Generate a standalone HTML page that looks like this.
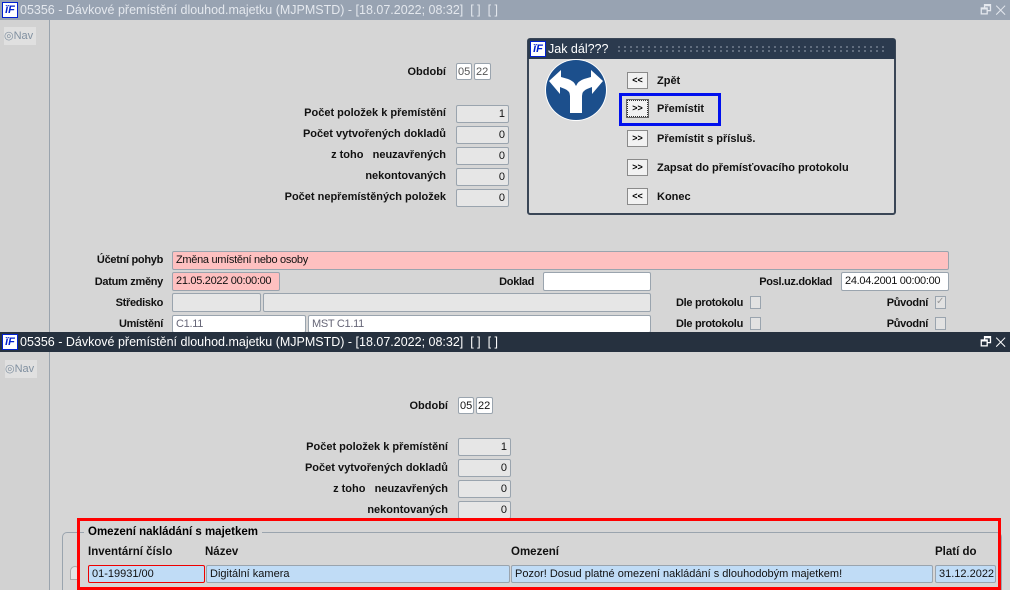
<!DOCTYPE html>
<html><head><meta charset="utf-8"><style>
*{margin:0;padding:0;box-sizing:border-box}
html,body{width:1010px;height:590px;overflow:hidden}
body{background:#d6d6d6;font-family:"Liberation Sans",sans-serif;font-size:11px;position:relative}
.a{position:absolute}
.lb{position:absolute;font-weight:bold;font-size:11px;text-align:right;color:#111;white-space:nowrap}
.f{position:absolute;background:#e6e6e6;border:1px solid #9aa4ae;border-radius:2px;font-size:11px;color:#111;padding:0 3px;line-height:16px;white-space:nowrap;overflow:hidden}
.fw{background:#fff}
.fr{text-align:right}
.tb{position:absolute;left:0;width:1010px;height:20px;font-size:12.5px;line-height:20px;padding-left:20px}
.logo{position:absolute;left:2px;top:2px;width:16px;height:16px;background:#fff;border:1px solid #0020d0;color:#0020d0;font:italic bold 11px/14px "Liberation Sans",sans-serif;text-align:center}
.nav{position:absolute;left:0;width:50px;border-right:1px solid #9aa4ae;background:#d2d2d2}
.btn{position:absolute;width:21px;height:17px;background:#f2f2f2;border:1px solid #8a8a8a;font-size:9px;font-weight:bold;text-align:center;line-height:15px}
.bl{position:absolute;font-weight:bold;font-size:11px;color:#111}
.cb{position:absolute;width:11px;height:13px;border:1px solid #9aa4ae;background:#e2e2e2}
.n{letter-spacing:-0.3px}
</style></head><body>
<!-- window 1 -->
<div class="tb" style="top:0;background:#98a3b2;color:#e4e8ee"><div class="logo">ĭF</div>05356 - Dávkové přemístění dlouhod.majetku (MJPMSTD) - [18.07.2022; 08:32] &nbsp;[ ] &nbsp;[ ]
<span class="a" style="right:4px;top:0;color:#e4e8ee">🗗 ✕</span></div>
<div class="nav" style="top:20px;height:312px"></div>
<div class="a" style="left:4px;top:27px;width:32px;height:18px;background:#e0e0e0;color:#8090a0;font-size:11px;line-height:18px">◎Nav</div>

<div class="lb" style="left:380px;top:66px;width:66px">Období</div>
<div class="f fw" style="left:456px;top:63px;width:16px;height:17px;padding:0 1px;color:#555">05</div>
<div class="f fw" style="left:474px;top:63px;width:17px;height:17px;padding:0 1px;color:#555">22</div>
<div class="lb" style="left:200px;top:107px;width:246px">Počet položek k přemístění</div>
<div class="f fr" style="left:456px;top:105px;width:53px;height:18px">1</div>
<div class="lb" style="left:200px;top:128px;width:246px">Počet vytvořených dokladů</div>
<div class="f fr" style="left:456px;top:126px;width:53px;height:18px">0</div>
<div class="lb" style="left:200px;top:149px;width:246px">z toho &nbsp;&nbsp;neuzavřených</div>
<div class="f fr" style="left:456px;top:147px;width:53px;height:18px">0</div>
<div class="lb" style="left:200px;top:170px;width:246px">nekontovaných</div>
<div class="f fr" style="left:456px;top:168px;width:53px;height:18px">0</div>
<div class="lb" style="left:200px;top:191px;width:246px">Počet nepřemístěných položek</div>
<div class="f fr" style="left:456px;top:189px;width:53px;height:18px">0</div>

<!-- dialog -->
<div class="a" style="left:527px;top:38px;width:369px;height:177px;background:#dcdcdc;border:2px solid #3a4656;border-radius:3px"></div>
<div class="a" style="left:528px;top:39px;width:367px;height:20px;background:#2b3a4e;color:#fff;font-size:12.5px;line-height:20px;padding-left:20px">Jak dál???<span class="a" style="left:88px;top:6px;width:270px;height:8px;background-image:radial-gradient(#8b96a6 1px,transparent 1.2px);background-size:6px 4px"></span><div class="logo" style="top:2px;left:2px">ĭF</div></div>
<svg class="a" style="left:544px;top:58px" width="64" height="64" viewBox="0 0 64 64"><circle cx="32" cy="32" r="31" fill="#fff"/><circle cx="32" cy="32" r="30" fill="#1c4f8c"/><path d="M26 55 V38 Q26 33 21 31 L16 29 V36 L5 23 L17 12 V19 L24 21 Q30 23 32 28 Q34 23 40 21 L47 19 V12 L59 23 L48 36 V29 L43 31 Q38 33 38 38 V55 Z" fill="#fff"/></svg>
<div class="btn" style="left:627px;top:72px">&lt;&lt;</div><div class="bl" style="left:657px;top:75px">Zpět</div>
<div class="a" style="left:619px;top:93px;width:102px;height:33px;border:3px solid #0010ee"></div>
<div class="btn" style="left:627px;top:100px;border:1px dotted #333;outline:1px solid #666">&gt;&gt;</div><div class="bl" style="left:657px;top:103px">Přemístit</div>
<div class="btn" style="left:627px;top:130px">&gt;&gt;</div><div class="bl" style="left:657px;top:133px">Přemístit s přísluš.</div>
<div class="btn" style="left:627px;top:159px">&gt;&gt;</div><div class="bl" style="left:657px;top:162px">Zapsat do přemísťovacího protokolu</div>
<div class="btn" style="left:627px;top:188px">&lt;&lt;</div><div class="bl" style="left:657px;top:191px">Konec</div>

<!-- lower section -->
<div class="lb n" style="left:60px;top:254px;width:103px">Účetní pohyb</div>
<div class="f n" style="left:172px;top:251px;width:777px;height:19px;line-height:17px;background:#fec0c0">Změna umístění nebo osoby</div>
<div class="lb n" style="left:60px;top:276px;width:103px">Datum změny</div>
<div class="f n" style="left:172px;top:272px;width:108px;height:19px;line-height:17px;background:#fec0c0">21.05.2022 00:00:00</div>
<div class="lb n" style="left:460px;top:276px;width:74px">Doklad</div>
<div class="f fw" style="left:543px;top:272px;width:108px;height:19px"></div>
<div class="lb n" style="left:720px;top:276px;width:112px">Posl.uz.doklad</div>
<div class="f fw n" style="left:841px;top:272px;width:108px;height:19px;line-height:17px">24.04.2001 00:00:00</div>
<div class="lb n" style="left:60px;top:297px;width:103px">Středisko</div>
<div class="f" style="left:172px;top:293px;width:89px;height:19px"></div>
<div class="f" style="left:263px;top:293px;width:388px;height:19px"></div>
<div class="lb n" style="left:640px;top:297px;width:103px">Dle protokolu</div>
<div class="cb" style="left:750px;top:296px"></div>
<div class="lb n" style="left:840px;top:297px;width:88px">Původní</div>
<div class="cb" style="left:935px;top:296px;font-size:10px;color:#999;line-height:10px">✓</div>
<div class="lb n" style="left:60px;top:318px;width:103px">Umístění</div>
<div class="f fw n" style="left:172px;top:315px;width:134px;height:18px;color:#667">C1.11</div>
<div class="f fw n" style="left:308px;top:315px;width:343px;height:18px;color:#667">MST C1.11</div>
<div class="lb n" style="left:640px;top:318px;width:103px">Dle protokolu</div>
<div class="cb" style="left:750px;top:317px"></div>
<div class="lb n" style="left:840px;top:318px;width:88px">Původní</div>
<div class="cb" style="left:935px;top:317px"></div>

<!-- window 2 -->
<div class="tb" style="top:332px;background:#26313f;color:#fff"><div class="logo">ĭF</div>05356 - Dávkové přemístění dlouhod.majetku (MJPMSTD) - [18.07.2022; 08:32] &nbsp;[ ] &nbsp;[ ]
<span class="a" style="right:4px;top:0;color:#fff">🗗 ✕</span></div>
<div class="nav" style="top:352px;height:238px"></div>
<div class="a" style="left:5px;top:360px;width:32px;height:18px;background:#e0e0e0;color:#8090a0;font-size:11px;line-height:18px">◎Nav</div>

<div class="lb" style="left:380px;top:400px;width:68px">Období</div>
<div class="f fw" style="left:458px;top:397px;width:16px;height:17px;padding:0 1px">05</div>
<div class="f fw" style="left:476px;top:397px;width:17px;height:17px;padding:0 1px">22</div>
<div class="lb" style="left:200px;top:441px;width:248px">Počet položek k přemístění</div>
<div class="f fr" style="left:458px;top:438px;width:53px;height:18px">1</div>
<div class="lb" style="left:200px;top:462px;width:248px">Počet vytvořených dokladů</div>
<div class="f fr" style="left:458px;top:459px;width:53px;height:18px">0</div>
<div class="lb" style="left:200px;top:483px;width:248px">z toho &nbsp;&nbsp;neuzavřených</div>
<div class="f fr" style="left:458px;top:480px;width:53px;height:18px">0</div>
<div class="lb" style="left:200px;top:504px;width:248px">nekontovaných</div>
<div class="f fr" style="left:458px;top:501px;width:53px;height:18px">0</div>

<div class="a" style="left:62px;top:532px;width:940px;height:70px;border:1px solid #9aa4ae;border-radius:5px"></div>
<div class="a" style="left:84px;top:526px;background:#d6d6d6;padding:0 4px;font-weight:bold;font-size:11.5px">Omezení nakládání s majetkem</div>
<div class="bl" style="left:88px;top:546px;font-size:11.5px">Inventární číslo</div>
<div class="bl" style="left:205px;top:546px;font-size:11.5px">Název</div>
<div class="bl" style="left:511px;top:546px;font-size:11.5px">Omezení</div>
<div class="bl" style="left:935px;top:546px;font-size:11.5px">Platí do</div>
<div class="a" style="left:70px;top:566px;width:10px;height:14px;border:1px solid #aaa;border-radius:5px 5px 0 0;background:#e4e4e4"></div>
<div class="f" style="left:88px;top:565px;width:117px;height:18px;background:#c0dcf6;border-color:#e00">01-19931/00</div>
<div class="f" style="left:206px;top:565px;width:304px;height:18px;background:#c0dcf6">Digitální kamera</div>
<div class="f" style="left:511px;top:565px;width:422px;height:18px;background:#c0dcf6">Pozor! Dosud platné omezení nakládání s dlouhodobým majetkem!</div>
<div class="f" style="left:935px;top:565px;width:61px;height:18px;background:#c0dcf6">31.12.2022</div>
<div class="a" style="left:77px;top:518px;width:924px;height:72px;border:3px solid #f00"></div>
</body></html>
